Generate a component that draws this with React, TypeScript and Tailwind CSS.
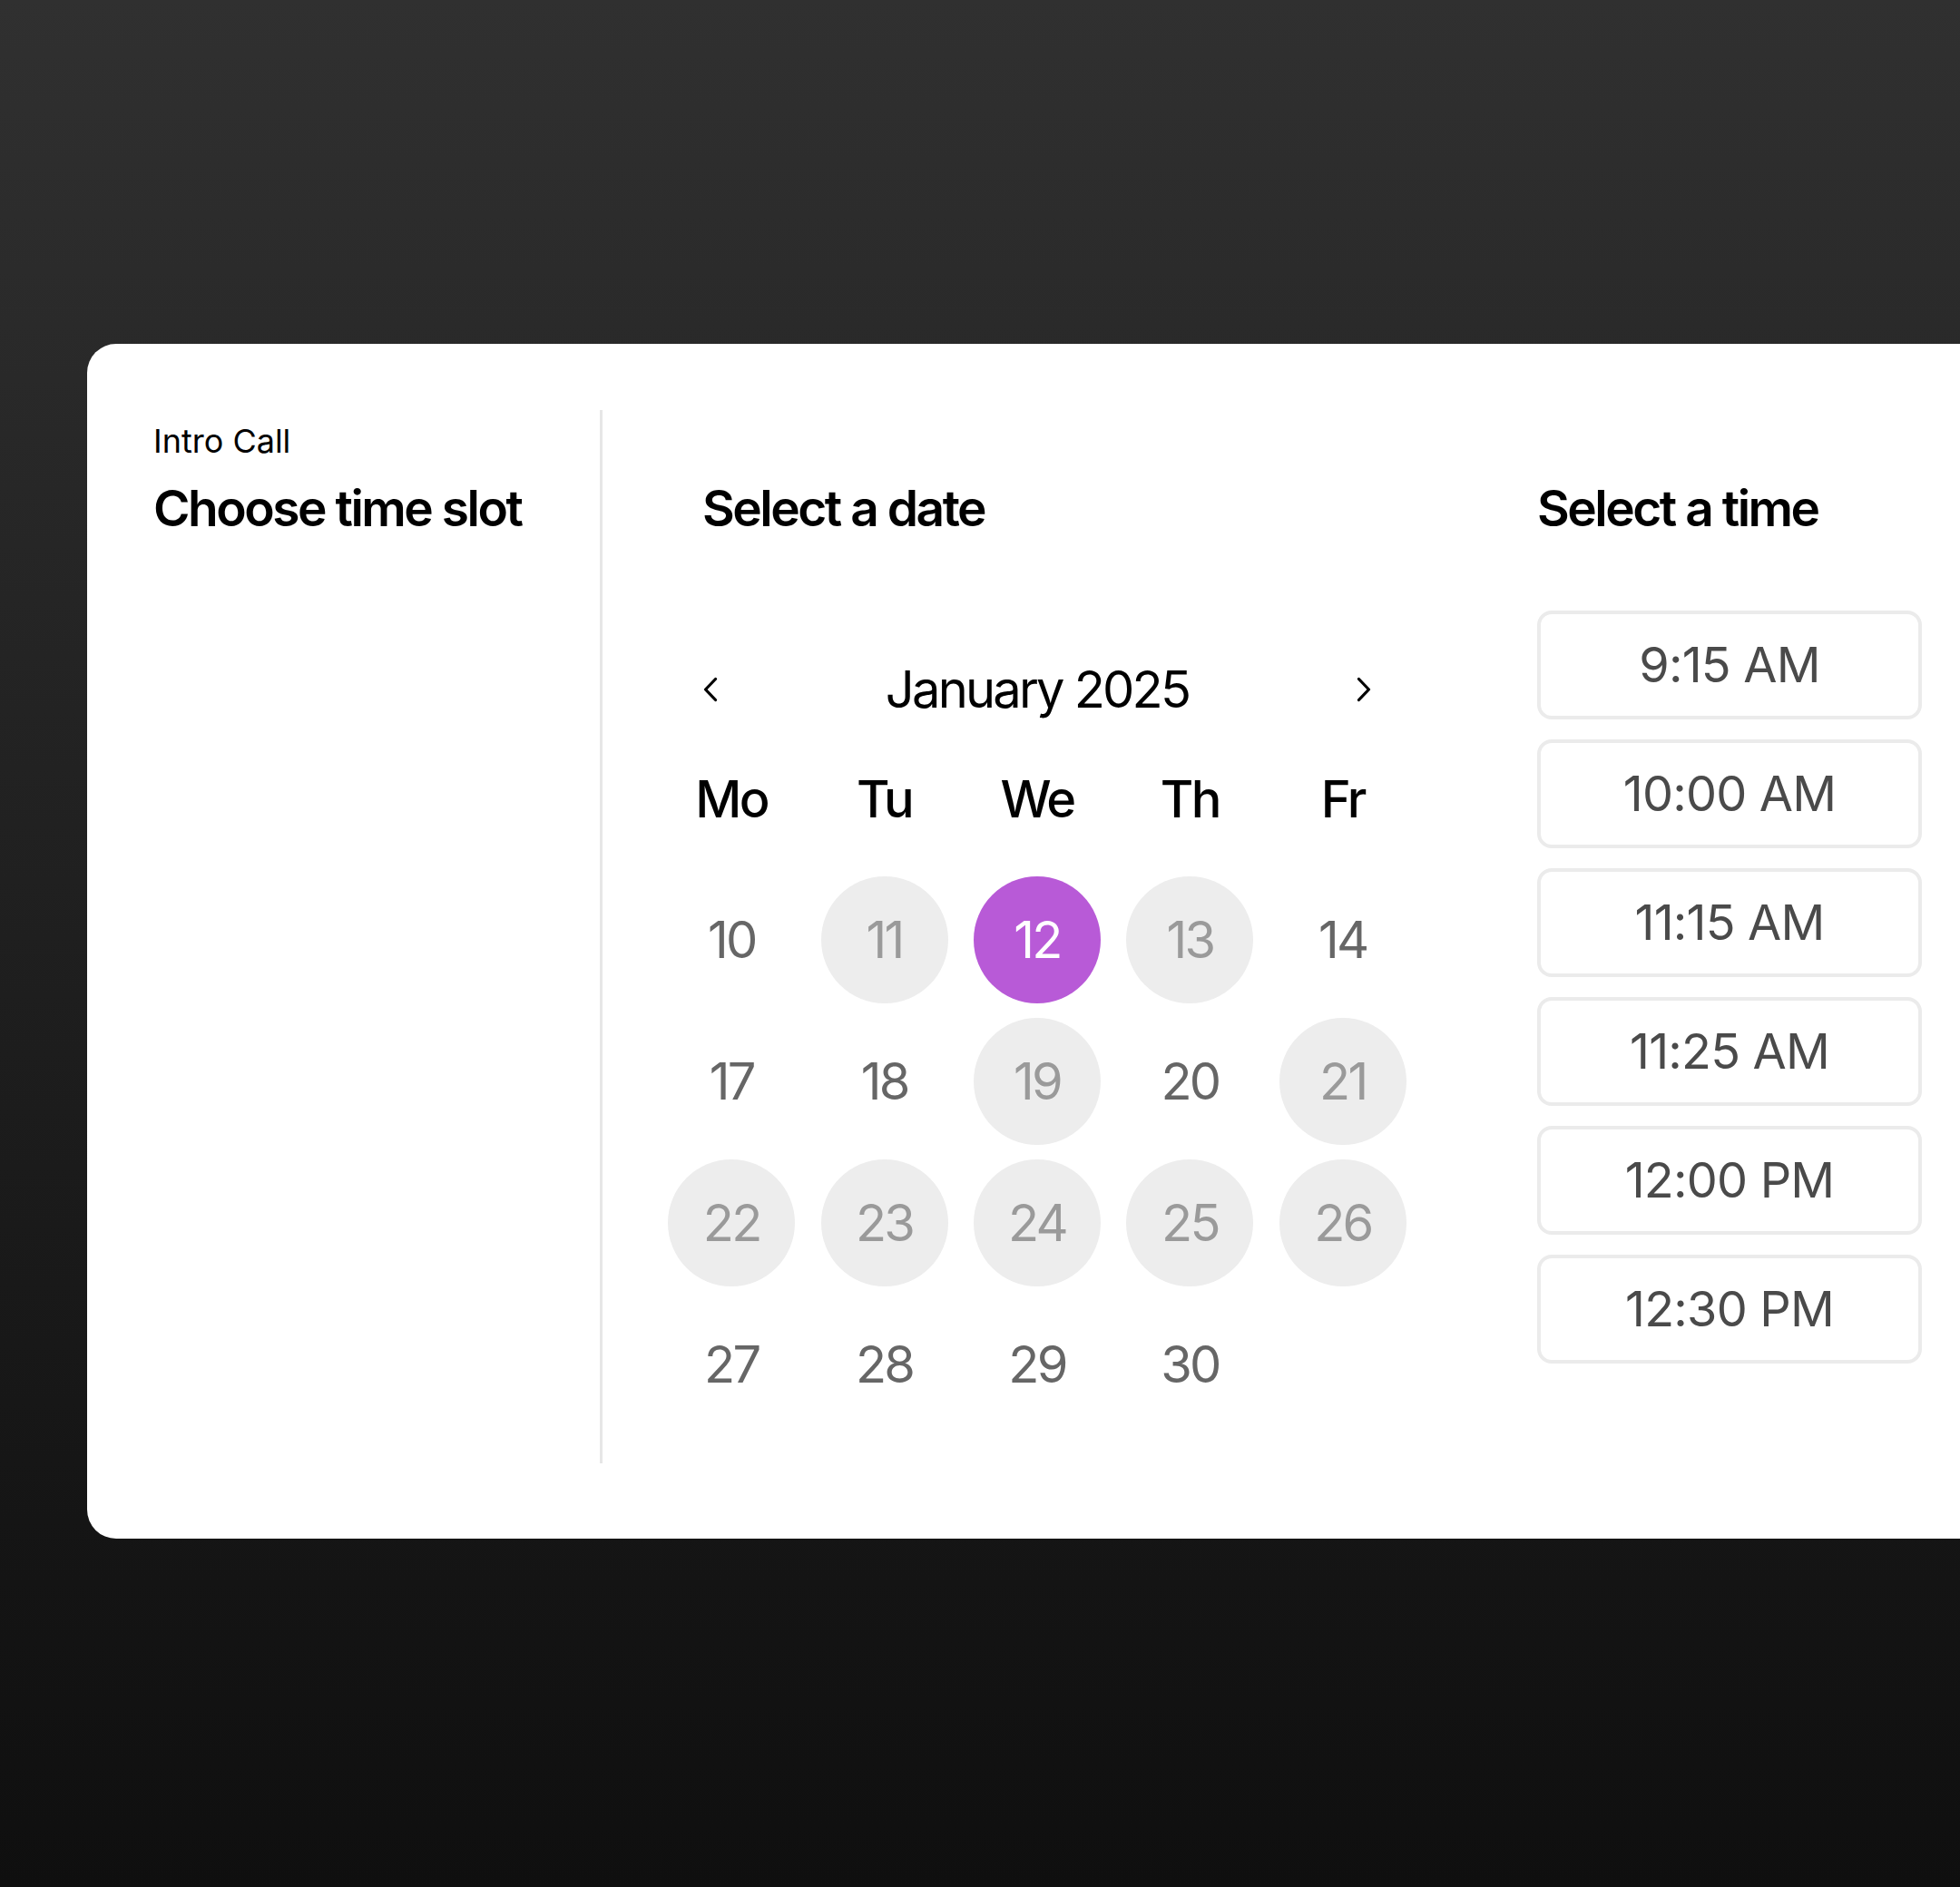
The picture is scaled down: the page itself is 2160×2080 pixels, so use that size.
import React from "react";

type DayKind = "plain" | "busy" | "selected" | "empty";

const weekdays = ["Mo", "Tu", "We", "Th", "Fr"];

const days: { label: string; kind: DayKind }[] = [
  { label: "10", kind: "plain" },
  { label: "11", kind: "busy" },
  { label: "12", kind: "selected" },
  { label: "13", kind: "busy" },
  { label: "14", kind: "plain" },
  { label: "17", kind: "plain" },
  { label: "18", kind: "plain" },
  { label: "19", kind: "busy" },
  { label: "20", kind: "plain" },
  { label: "21", kind: "busy" },
  { label: "22", kind: "busy" },
  { label: "23", kind: "busy" },
  { label: "24", kind: "busy" },
  { label: "25", kind: "busy" },
  { label: "26", kind: "busy" },
  { label: "27", kind: "plain" },
  { label: "28", kind: "plain" },
  { label: "29", kind: "plain" },
  { label: "30", kind: "plain" },
  { label: "", kind: "empty" },
];

const times = ["9:15 AM", "10:00 AM", "11:15 AM", "11:25 AM", "12:00 PM", "12:30 PM"];

function Chevron({ dir }: { dir: "left" | "right" }) {
  return (
    <svg width="16" height="28" viewBox="0 0 16 28" fill="none">
      <path
        d={dir === "left" ? "M13.5 2.5 L2.5 14 L13.5 25.5" : "M2.5 2.5 L13.5 14 L2.5 25.5"}
        stroke="#000"
        strokeWidth="3.2"
        strokeLinecap="round"
        strokeLinejoin="round"
      />
    </svg>
  );
}

function Day({ label, kind }: { label: string; kind: DayKind }) {
  if (kind === "empty") return <div className="h-[140px]" />;
  const tone =
    kind === "selected"
      ? "bg-[#b85ad7] text-white"
      : kind === "busy"
        ? "bg-[#ededed] text-[#9a9a9a]"
        : "text-[#666666]";
  return (
    <div className="flex justify-center">
      <div
        className={`flex h-[140px] w-[140px] items-center justify-center rounded-full text-[56px] leading-none tracking-[-0.05em] ${tone}`}
      >
        {label}
      </div>
    </div>
  );
}

export default function App() {
  return (
    <div
      className="h-[2080px] w-[2160px] overflow-hidden bg-linear-to-b from-[#303030] to-[#0f0f0f] pl-[96px] pt-[379px]"
      style={{ fontFamily: "Inter, 'Liberation Sans', sans-serif" }}
    >
      <div className="flex w-[2200px] rounded-[32px] bg-white pb-[83px] pl-[73px] pt-[73px] text-black">
        {/* left: event info */}
        <div className="w-[492px]">
          <div className="mt-[16px] text-[36px] leading-none">Intro Call</div>
          <h1 className="mt-[29px] text-[55px] font-semibold leading-none tracking-[-0.045em]">
            Choose time slot
          </h1>
        </div>

        <div className="h-[1161px] w-[3px] bg-[#e6e6e6]" />

        {/* middle: calendar */}
        <div className="ml-[58px] w-[842px]">
          <h2 className="mt-[81px] pl-[52px] text-[55px] font-semibold leading-none tracking-[-0.045em]">
            Select a date
          </h2>

          <div className="mt-[144px] flex h-[56px] items-center justify-between px-[53px]">
            <Chevron dir="left" />
            <div className="text-[56px] leading-none tracking-[-0.05em]">January 2025</div>
            <Chevron dir="right" />
          </div>

          <div className="mt-[65px] grid h-[56px] grid-cols-5 items-center">
            {weekdays.map((w) => (
              <div key={w} className="text-center text-[56px] font-medium leading-none tracking-[-0.045em]">
                {w}
              </div>
            ))}
          </div>

          <div className="mt-[57px] grid grid-cols-5 gap-y-[16px]">
            {days.map((d, i) => (
              <Day key={i} label={d.label} kind={d.kind} />
            ))}
          </div>
        </div>

        {/* right: time slots */}
        <div className="ml-[130px] w-[424px]">
          <h2 className="mt-[81px] text-[55px] font-semibold leading-none tracking-[-0.045em]">
            Select a time
          </h2>
          <div className="mt-[85px] flex flex-col gap-[22px]">
            {times.map((t) => (
              <button
                key={t}
                className="flex h-[120px] w-[424px] items-center justify-center rounded-[16px] border-[4px] border-[#ebebeb] bg-white text-[54px] leading-none tracking-[-0.015em] text-[#4a4a4a]"
              >
                {t}
              </button>
            ))}
          </div>
        </div>
      </div>
    </div>
  );
}
